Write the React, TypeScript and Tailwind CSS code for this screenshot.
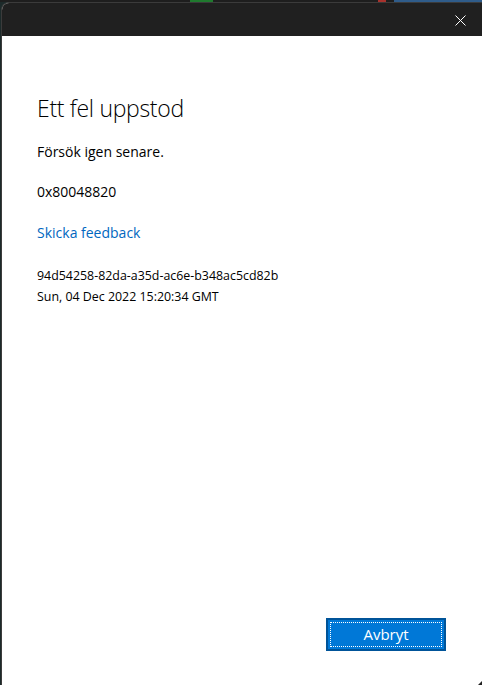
export default function App() {
  return (
    <div className="w-[482px] h-[685px] flex flex-col bg-[#1c2a2a] overflow-hidden" style={{ fontFamily: '"Open Sans", "Noto Sans", sans-serif' }}>
      {/* desktop peeking through above the window */}
      <div className="h-[2px] flex bg-[#1e1e1e]">
        <div className="w-[190px]" />
        <div className="w-[23px] bg-[#1f7a2e]" />
        <div className="w-[165px]" />
        <div className="w-[8px] bg-[#a8322d]" />
        <div className="w-[8px]" />
        <div className="flex-1 bg-[#2f5c8a]" />
      </div>

      <div className="flex-1 flex flex-col ml-[1px] border-l border-t border-[#3b3b3b] rounded-tl-[8px] overflow-hidden bg-white relative">
        <div className="h-[33px] bg-[#202020] flex items-center justify-end pr-[16px]">
          <svg width="11" height="11" viewBox="0 0 11 11" className="mt-[1px]">
            <path d="M0.5 0.5 L10.5 10.5 M10.5 0.5 L0.5 10.5" stroke="#fff" strokeWidth="1" fill="none" />
          </svg>
        </div>

        <div className="flex-1 flex flex-col pl-[35px] pr-[36px] text-black">
          <h1 className="mt-[57px] text-[23px] leading-[30px] font-light tracking-[-0.3px]">Ett fel uppstod</h1>
          <p className="mt-[19px] text-[14px] leading-[20px]">Försök igen senare.</p>
          <p className="mt-[20px] text-[14px] leading-[20px]">0x80048820</p>
          <p className="mt-[21px] text-[14px] leading-[20px] text-[#0067c0]">Skicka feedback</p>
          <p className="mt-[22px] text-[12.4px] leading-[21px]">94d54258-82da-a35d-ac6e-b348ac5cd82b</p>
          <p className="text-[12.4px] leading-[21px]">Sun, 04 Dec 2022 15:20:34 GMT</p>

          <div className="mt-auto mb-[34px] flex justify-end">
            <button className="w-[120px] h-[33px] bg-[#0078d7] border-2 border-[#005499] p-[2px]">
              <div className="h-full border border-dotted border-white flex items-center justify-center text-white text-[15px]">
                Avbryt
              </div>
            </button>
          </div>
        </div>

        <div className="absolute right-0 bottom-0 w-0 h-0 border-l-[4px] border-l-transparent border-b-[4px] border-b-[#222]" />
      </div>
    </div>
  );
}
